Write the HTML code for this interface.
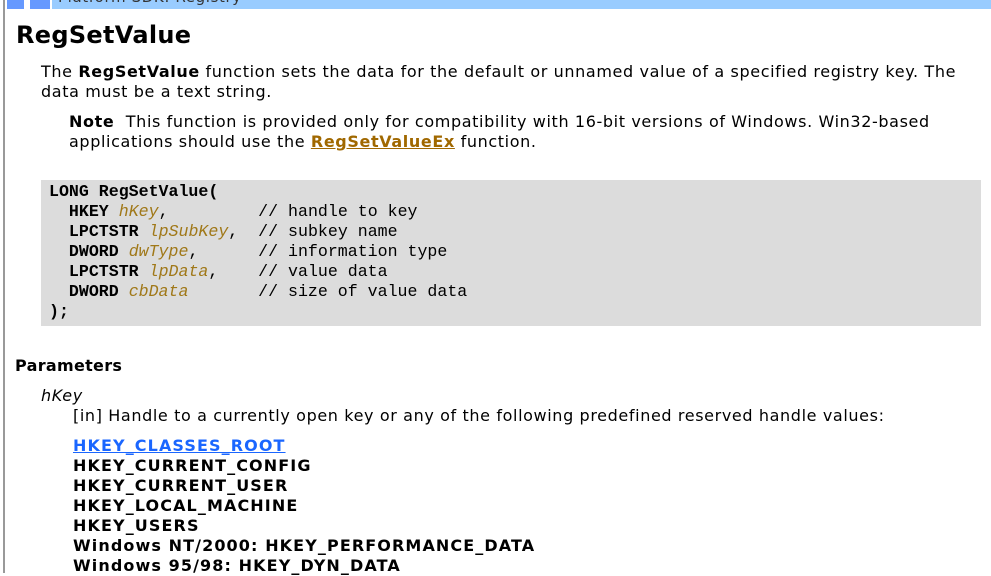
<!DOCTYPE html>
<html><head><meta charset="utf-8"><style>
body{margin:0;width:991px;height:573px;overflow:hidden;background:#fff;font-family:"DejaVu Sans","Liberation Sans",sans-serif;font-size:16px;color:#000;position:relative}
.a{position:absolute;white-space:nowrap;line-height:20px;letter-spacing:0.62px}
.bar{position:absolute;top:0;height:9px}
pre.a{margin:0;font-family:"Liberation Mono",monospace;font-size:16.6px;line-height:20px;white-space:pre;letter-spacing:0}
.i{color:#a07818;font-style:italic}
b{font-weight:bold}
a{color:#a06800;font-weight:bold;text-decoration:underline}
</style></head><body>
<div style="position:absolute;left:3px;top:0;width:2px;height:573px;background:#999"></div>
<div class="bar" style="left:7px;width:17px;background:#6699ff"></div>
<div class="bar" style="left:30px;width:20px;background:#6699ff"></div>
<div class="bar" style="left:52px;width:939px;background:#99ccff"></div>
<div class="a" style="left:58px;top:-13px;color:#333;font-size:15px">Platform SDK: Registry</div>
<div class="a" style="left:16px;top:20px;font-size:24px;line-height:30px;font-weight:bold;letter-spacing:0.3px">RegSetValue</div>
<div class="a" style="left:41px;top:62px">The <b>RegSetValue</b> function sets the data for the default or unnamed value of a specified registry key. The</div>
<div class="a" style="left:41px;top:82px">data must be a text string.</div>
<div class="a" style="left:69px;top:112px"><b>Note</b>&nbsp; This function is provided only for compatibility with 16-bit versions of Windows. Win32-based</div>
<div class="a" style="left:69px;top:132px">applications should use the <a>RegSetValueEx</a> function.</div>
<div style="position:absolute;left:41px;top:180px;width:940px;height:146px;background:#dcdcdc"></div>
<pre class="a" style="left:49px;top:182px"><b>LONG RegSetValue(</b>
  <b>HKEY</b> <span class="i">hKey</span>,         // handle to key
  <b>LPCTSTR</b> <span class="i">lpSubKey</span>,  // subkey name
  <b>DWORD</b> <span class="i">dwType</span>,      // information type
  <b>LPCTSTR</b> <span class="i">lpData</span>,    // value data
  <b>DWORD</b> <span class="i">cbData</span>       // size of value data
<b>);</b></pre>
<div class="a" style="left:15px;top:356px;font-weight:bold;letter-spacing:0.3px">Parameters</div>
<div class="a" style="left:41px;top:386px;font-style:italic">hKey</div>
<div class="a" style="left:73px;top:406px">[in] Handle to a currently open key or any of the following predefined reserved handle values:</div>
<div class="a" style="left:73px;top:436px;font-weight:bold;letter-spacing:1.1px"><span style="color:#1a66ff;text-decoration:underline">HKEY_CLASSES_ROOT</span><br>HKEY_CURRENT_CONFIG<br>HKEY_CURRENT_USER<br>HKEY_LOCAL_MACHINE<br>HKEY_USERS<br>Windows NT/2000: HKEY_PERFORMANCE_DATA<br>Windows 95/98: HKEY_DYN_DATA</div>
</body></html>
